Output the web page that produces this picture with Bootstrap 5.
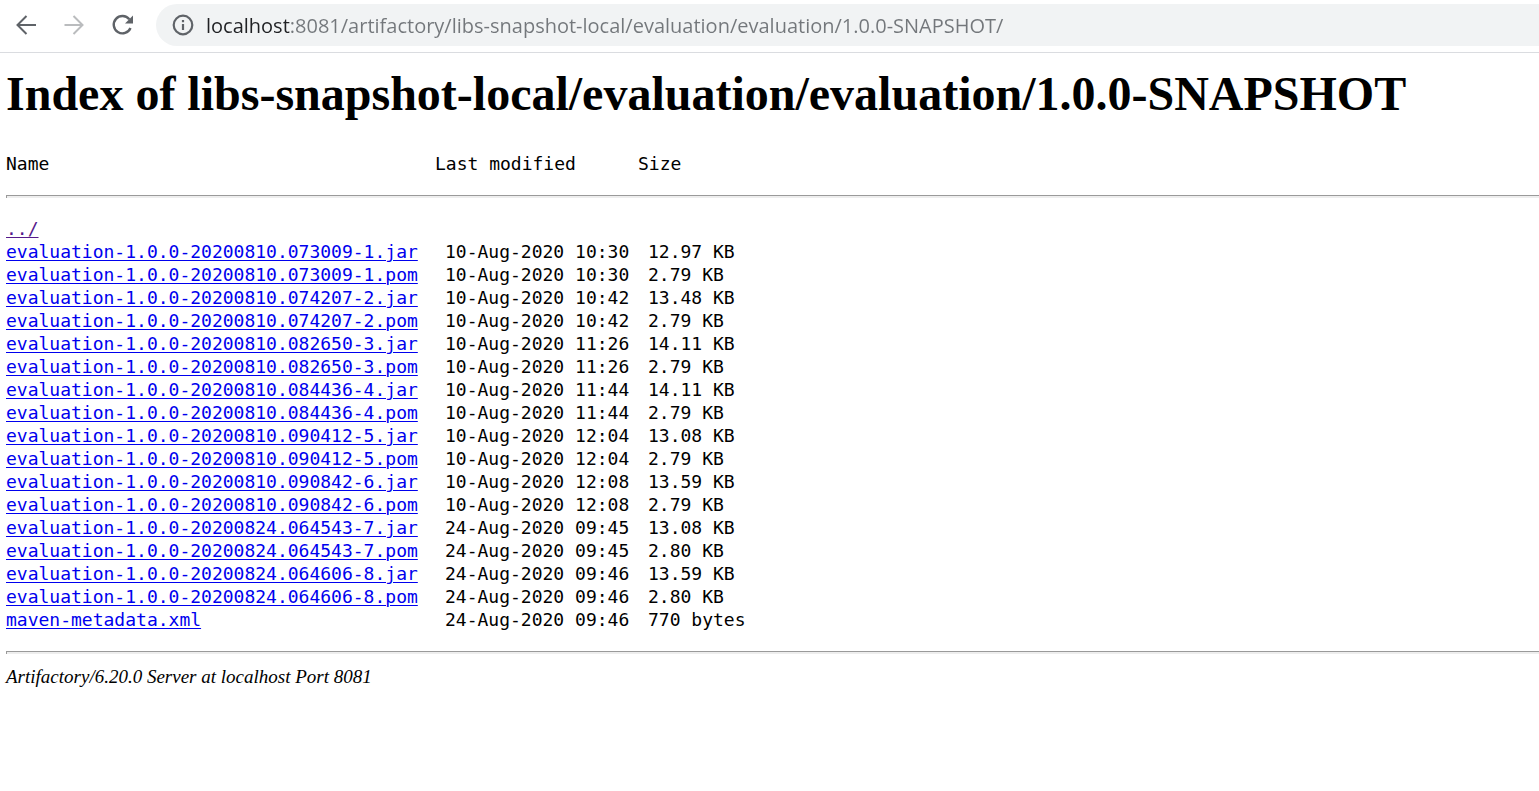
<!DOCTYPE html>
<html lang="en">
<head>
<meta charset="utf-8">
<meta name="viewport" content="width=device-width, initial-scale=1">
<title>Index of libs-snapshot-local/evaluation/evaluation/1.0.0-SNAPSHOT</title>
<link href="https://cdn.jsdelivr.net/npm/bootstrap@5.3.0/dist/css/bootstrap.min.css" rel="stylesheet">
<style>
  body { font-family: "Liberation Serif", "Times New Roman", serif; color: #000; background: #fff; }
  .toolbar { height: 53px; padding: 4px 0 6px 14px; border-bottom: 1px solid #dadce0; }
  .tool-btn { width: 24px; height: 24px; color: #5f6368; line-height: 1; }
  .tool-btn:disabled { color: #babcbe; opacity: 1; }
  .tool-group { gap: 24px; margin-right: 22px; }
  .omnibox { height: 42px; padding-left: 16px; gap: 12px; background: #f1f3f4; border-radius: 21px 0 0 21px; color: #5f6368; }
  /* host name dark, rest of the address grey */
  .address-field {
    font-family: "Open Sans", "Segoe UI", sans-serif; font-size: 20px; line-height: 30px;
    border: 0; padding: 2px 0 0; outline: 0;
    background: linear-gradient(to right, #202124 84px, #73777b 84px);
    -webkit-background-clip: text; background-clip: text;
    -webkit-text-fill-color: transparent;
  }
  .listing { padding: 13px 0 0 6px; }
  .listing h1 { font-size: 48px; line-height: 56px; font-weight: 700; margin-bottom: 30px; white-space: nowrap; }
  .files { width: 100%; table-layout: fixed; font-family: "DejaVu Sans Mono", Consolas, monospace; font-size: 18px; line-height: 23px; white-space: nowrap; }
  .files th { font-weight: 400; padding: 0 0 20px; }
  .files td { padding: 0; }
  .files td + td { padding-left: 10px; }
  .files .rule-row td { padding: 0 0 19px; line-height: 0; }
  .col-name { width: 429px; }
  .col-date { width: 203px; }
  .files a { color: #00e; text-decoration: underline; text-underline-offset: 2px; text-decoration-thickness: 1px; }
  .files a.seen { color: #551a8b; }
  .rule { height: 3px; margin: 0; border: 0; border-top: 1px solid #9a9a9a; border-left: 1px solid #9a9a9a; background: #eee; opacity: 1; }
  .rule-end { margin-top: 20px; margin-bottom: 11px; }
  .listing address { font-size: 19px; line-height: 23px; font-style: italic; margin: 0; }
</style>
</head>
<body>
<nav class="toolbar d-flex align-items-center" aria-label="Browser">
  <div class="tool-group d-flex">
    <button type="button" class="tool-btn btn p-0 border-0" aria-label="Back">
      <svg class="d-block" width="24" height="24" viewBox="0 0 24 24" fill="none" stroke="currentColor" stroke-width="2"><path d="M22 12H4M12.500 3L3.500 12l9 9"/></svg>
    </button>
    <button type="button" class="tool-btn btn p-0 border-0" aria-label="Forward" disabled>
      <svg class="d-block" width="24" height="24" viewBox="0 0 24 24" fill="none" stroke="currentColor" stroke-width="2"><path d="M2.500 12H20M11.500 3l9 9-9 9"/></svg>
    </button>
    <button type="button" class="tool-btn btn p-0 border-0" aria-label="Reload">
      <svg class="d-block" width="24" height="24" viewBox="0 0 24 24" fill="none"><path d="M19.300 6.300A8.700 8.700 0 1 0 20.500 15" stroke="currentColor" stroke-width="2.400"/><path d="M23 2.500v8h-8z" fill="currentColor"/></svg>
    </button>
  </div>
  <div class="omnibox d-flex align-items-center flex-grow-1">
    <svg class="flex-shrink-0" width="22" height="22" viewBox="0 0 22 22" fill="none" stroke="currentColor" stroke-width="2.200" aria-hidden="true"><circle cx="11" cy="11" r="9.300"/><path d="M11 10v6M11 6v2.300"/></svg>
    <input type="text" class="address-field flex-grow-1" aria-label="Address" value="localhost:8081/artifactory/libs-snapshot-local/evaluation/evaluation/1.0.0-SNAPSHOT/">
  </div>
</nav>

<main class="listing">
  <h1>Index of libs-snapshot-local/evaluation/evaluation/1.0.0-SNAPSHOT</h1>
  <table class="files">
    <colgroup><col class="col-name"><col class="col-date"><col></colgroup>
    <thead>
      <tr><th scope="col">Name</th><th scope="col">Last modified</th><th scope="col">Size</th></tr>
    </thead>
    <tbody>
      <tr class="rule-row"><td colspan="3"><hr class="rule"></td></tr>
      <tr><td><a class="seen" href="#">../</a></td><td></td><td></td></tr>
      <tr><td><a href="#">evaluation-1.0.0-20200810.073009-1.jar</a></td><td>10-Aug-2020 10:30</td><td>12.97 KB</td></tr>
      <tr><td><a href="#">evaluation-1.0.0-20200810.073009-1.pom</a></td><td>10-Aug-2020 10:30</td><td>2.79 KB</td></tr>
      <tr><td><a href="#">evaluation-1.0.0-20200810.074207-2.jar</a></td><td>10-Aug-2020 10:42</td><td>13.48 KB</td></tr>
      <tr><td><a href="#">evaluation-1.0.0-20200810.074207-2.pom</a></td><td>10-Aug-2020 10:42</td><td>2.79 KB</td></tr>
      <tr><td><a href="#">evaluation-1.0.0-20200810.082650-3.jar</a></td><td>10-Aug-2020 11:26</td><td>14.11 KB</td></tr>
      <tr><td><a href="#">evaluation-1.0.0-20200810.082650-3.pom</a></td><td>10-Aug-2020 11:26</td><td>2.79 KB</td></tr>
      <tr><td><a href="#">evaluation-1.0.0-20200810.084436-4.jar</a></td><td>10-Aug-2020 11:44</td><td>14.11 KB</td></tr>
      <tr><td><a href="#">evaluation-1.0.0-20200810.084436-4.pom</a></td><td>10-Aug-2020 11:44</td><td>2.79 KB</td></tr>
      <tr><td><a href="#">evaluation-1.0.0-20200810.090412-5.jar</a></td><td>10-Aug-2020 12:04</td><td>13.08 KB</td></tr>
      <tr><td><a href="#">evaluation-1.0.0-20200810.090412-5.pom</a></td><td>10-Aug-2020 12:04</td><td>2.79 KB</td></tr>
      <tr><td><a href="#">evaluation-1.0.0-20200810.090842-6.jar</a></td><td>10-Aug-2020 12:08</td><td>13.59 KB</td></tr>
      <tr><td><a href="#">evaluation-1.0.0-20200810.090842-6.pom</a></td><td>10-Aug-2020 12:08</td><td>2.79 KB</td></tr>
      <tr><td><a href="#">evaluation-1.0.0-20200824.064543-7.jar</a></td><td>24-Aug-2020 09:45</td><td>13.08 KB</td></tr>
      <tr><td><a href="#">evaluation-1.0.0-20200824.064543-7.pom</a></td><td>24-Aug-2020 09:45</td><td>2.80 KB</td></tr>
      <tr><td><a href="#">evaluation-1.0.0-20200824.064606-8.jar</a></td><td>24-Aug-2020 09:46</td><td>13.59 KB</td></tr>
      <tr><td><a href="#">evaluation-1.0.0-20200824.064606-8.pom</a></td><td>24-Aug-2020 09:46</td><td>2.80 KB</td></tr>
      <tr><td><a href="#">maven-metadata.xml</a></td><td>24-Aug-2020 09:46</td><td>770 bytes</td></tr>
    </tbody>
  </table>
  <hr class="rule rule-end">
  <address>Artifactory/6.20.0 Server at localhost Port 8081</address>
</main>
<script src="https://cdn.jsdelivr.net/npm/bootstrap@5.3.0/dist/js/bootstrap.bundle.min.js"></script>
</body>
</html>
